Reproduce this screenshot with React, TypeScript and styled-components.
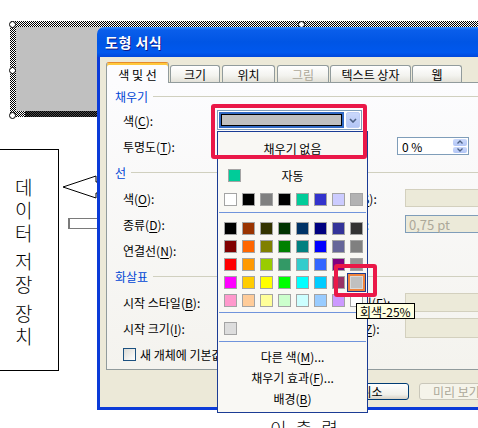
import React from 'react'
import styled, { createGlobalStyle, css } from 'styled-components'

const UI_FONT = `'Noto Sans CJK KR', 'Noto Sans', sans-serif`
const RED = '#EA1848'

const GlobalStyle = createGlobalStyle`
  html, body {
    margin: 0;
    padding: 0;
    background: #fff;
    overflow: hidden;
  }
  body {
    font-family: ${UI_FONT};
  }
`

const Canvas = styled.div`
  position: relative;
  width: 478px;
  height: 428px;
  overflow: hidden;
  background: #fff;
  font-family: ${UI_FONT};
  font-size: 12px;
  color: #000;
`

// ---- slide canvas behind the dialog ----

const checker = css`
  background-color: #fff;
  background-image: repeating-conic-gradient(#000 0 25%, #fff 0 50%);
  background-size: 2px 2px;
`

const ShapeFrame = styled.div`
  position: absolute;
  left: 10px;
  top: 21px;
  width: 600px;
  height: 96px;
  box-sizing: border-box;
  padding: 6px 0 6px 6px;
  ${checker}
`

const ShapeFill = styled.div`
  height: 100%;
  background: #c0c0c0;
`

const ShadowBand = styled.div`
  position: absolute;
  left: 25px;
  top: 111px;
  width: 80px;
  height: 6px;
  background-color: #000;
  background-image: repeating-conic-gradient(#000 0 25%, #4a4a4a 0 50%);
  background-size: 2px 2px;
`

const Handle = styled.div<{ $x: number; $y: number }>`
  position: absolute;
  left: ${(p) => p.$x - 3.5}px;
  top: ${(p) => p.$y - 3.5}px;
  width: 7px;
  height: 7px;
  box-sizing: border-box;
  border: 1px solid #000;
  border-radius: 50%;
  background: #fff;
`

const TextShape = styled.div`
  position: absolute;
  left: -2px;
  top: 149px;
  width: 61px;
  height: 222px;
  box-sizing: border-box;
  border: 1px solid #000;
  background: #fff;
  padding: 25px 0 0 16px;
  display: flex;
  flex-direction: column;
  font-size: 19px;
  line-height: 23px;
  font-weight: 300;
`

const Word = styled.div<{ $gap?: number }>`
  display: flex;
  flex-direction: column;
  margin-top: ${(p) => p.$gap ?? 0}px;
`

const ArrowShape = styled.svg`
  position: absolute;
  left: 60px;
  top: 172px;
`

const BarShape = styled.div`
  position: absolute;
  left: 68px;
  top: 218px;
  width: 40px;
  height: 11px;
  box-sizing: border-box;
  border: 1px solid #7a7a7a;
  border-left-width: 2px;
  background: #fff;
`

const BottomCaption = styled.div`
  position: absolute;
  left: 270px;
  top: 419px;
  display: flex;
  gap: 9px;
  font-size: 18px;
  line-height: 18px;
  font-weight: 300;
`

// ---- dialog ----

const Dialog = styled.div`
  position: absolute;
  left: 97px;
  top: 27px;
  width: 430px;
  display: flex;
  flex-direction: column;
`

const TitleBar = styled.div`
  height: 30px;
  box-sizing: border-box;
  padding-left: 8px;
  display: flex;
  align-items: center;
  border-radius: 7px 7px 0 0;
  background: linear-gradient(
    180deg,
    #3c8ef8 0%,
    #0a5eeb 10%,
    #0055e5 50%,
    #0058ee 85%,
    #0048db 100%
  );
  color: #fff;
  font-weight: 700;
  font-size: 14px;
  letter-spacing: 0.5px;
  text-shadow: 1px 1px 0 #0f1c89;
`

const Body = styled.div`
  background: #ece9d8;
  border-left: 3px solid #0b3bd8;
  border-bottom: 3px solid #0b3bd8;
  padding: 5px 6px 7px 6px;
`

const TabRow = styled.div`
  display: flex;
  align-items: flex-end;
  height: 20px;
  position: relative;
  z-index: 1;
`

const Tab = styled.div<{ $w: number; $ml?: number; $active?: boolean; $disabled?: boolean }>`
  width: ${(p) => p.$w}px;
  margin-left: ${(p) => p.$ml ?? 0}px;
  height: ${(p) => (p.$active ? 21 : 17)}px;
  margin-bottom: ${(p) => (p.$active ? -1 : 0)}px;
  box-sizing: border-box;
  border: 1px solid #919b9c;
  border-bottom: none;
  border-radius: 3px 3px 0 0;
  display: flex;
  align-items: center;
  justify-content: center;
  white-space: nowrap;
  color: ${(p) => (p.$disabled ? '#aca899' : '#000')};
  background: linear-gradient(180deg, #ffffff 0%, #f3f3ef 60%, #e3e1d8 100%);

  ${(p) =>
    p.$active &&
    css`
      background: #fcfcfe;
      border-top-color: #e68b2c;
      box-shadow: inset 0 2px 0 #ffc83c;
      padding-top: 2px;
    `}
`

const Panel = styled.div`
  height: 288px;
  box-sizing: border-box;
  border: 1px solid #919b9c;
  background: linear-gradient(180deg, #fcfcfe 0%, #f4f3ee 100%);
  padding-top: 2px;
`

const GroupHeader = styled.div<{ $h?: number }>`
  height: ${(p) => p.$h ?? 26}px;
  display: flex;
  align-items: center;
  gap: 5px;
  padding-left: 8px;
  color: #0046d5;

  &::after {
    content: '';
    flex: 1;
    height: 1px;
    background: #d0d0bf;
  }
`

const Row = styled.div`
  height: 26px;
  display: flex;
  align-items: center;
  padding-left: 16px;
  white-space: nowrap;
`

const Label = styled.div`
  width: 94px;
  flex: none;
`

const U = styled.span`
  text-decoration: underline;
  text-underline-offset: 2px;
`

const FillCombo = styled.div`
  width: 145px;
  height: 20px;
  box-sizing: border-box;
  border: 1px solid #7f9db9;
  background: #fff;
  padding: 1px;
  display: flex;
  gap: 2px;
`

const FillSelection = styled.div`
  flex: 1;
  box-sizing: border-box;
  background: #316ac5;
  padding: 2px;
`

const FillSwatch = styled.div`
  height: 100%;
  box-sizing: border-box;
  border: 1px solid #000;
  background: #c0c0c0;
`

const DropButton = styled.div`
  width: 14px;
  box-sizing: border-box;
  border: 1px solid #bccdf5;
  border-radius: 2px;
  background: linear-gradient(180deg, #cad8fb 0%, #b3c6f6 100%);
  display: flex;
  align-items: center;
  justify-content: center;
`

const SliderTrack = styled.div`
  width: 150px;
  height: 4px;
  border: 1px solid #9d9c99;
  background: #f3f2ec;
  box-sizing: border-box;
`

const SpinBox = styled.div`
  margin-left: 30px;
  width: 72px;
  height: 18px;
  box-sizing: border-box;
  border: 1px solid #7f9db9;
  background: #fff;
  display: flex;
  align-items: center;
  padding-left: 4px;
`

const SpinValue = styled.div`
  flex: 1;
`

const SpinButtons = styled.div`
  width: 16px;
  height: 100%;
  padding: 1px;
  box-sizing: border-box;
  display: flex;
  flex-direction: column;
  gap: 1px;
`

const SpinButton = styled.div`
  flex: 1;
  border-radius: 2px;
  background: linear-gradient(180deg, #cad8fb 0%, #b3c6f6 100%);
  display: flex;
  align-items: center;
  justify-content: center;
`

const SmallCombo = styled.div`
  width: 100px;
  height: 18px;
  box-sizing: border-box;
  border: 1px solid #7f9db9;
  background: #fff;
`

const RightLabel = styled.div`
  width: 80px;
  margin-left: 8px;
  flex: none;
`

const FieldBox = styled.div<{ $h?: number; $blue?: boolean }>`
  width: 100px;
  height: ${(p) => p.$h ?? 18}px;
  box-sizing: border-box;
  border: 1px solid ${(p) => (p.$blue ? '#7f9db9' : '#d3d0be')};
  background: #ecead9;
  color: #aca899;
  padding-left: 3px;
  display: flex;
  align-items: center;
  font-size: 13px;
`

const CheckBox = styled.div`
  width: 13px;
  height: 13px;
  box-sizing: border-box;
  border: 1px solid #1c5180;
  background: linear-gradient(135deg, #dcdbd5 0%, #ffffff 100%);
  margin-right: 4px;
`

const ButtonRow = styled.div`
  display: flex;
  gap: 10px;
  margin-top: 13px;
  padding-left: 143px;
`

const Button = styled.div<{ $disabled?: boolean }>`
  width: 75px;
  height: 17px;
  flex: none;
  box-sizing: border-box;
  border: 1px solid ${(p) => (p.$disabled ? '#c9c7ba' : '#003c74')};
  border-radius: 3px;
  background: ${(p) =>
    p.$disabled ? '#f5f4ea' : 'linear-gradient(180deg, #ffffff 0%, #f0f0ea 70%, #d6d0c5 100%)'};
  color: ${(p) => (p.$disabled ? '#aca899' : '#000')};
  display: flex;
  align-items: center;
  justify-content: center;
  white-space: nowrap;
`

// ---- colour dropdown ----

const Popup = styled.div`
  position: absolute;
  left: 217px;
  top: 131px;
  width: 151px;
  height: 282px;
  box-sizing: border-box;
  border: 1px solid #1b3c95;
  background: #f9f8f4;
  display: flex;
  flex-direction: column;
  z-index: 5;
`

const NoFill = styled.div`
  height: 32px;
  flex: none;
  display: flex;
  align-items: center;
  justify-content: center;
`

const AutoRow = styled.div`
  height: 22px;
  flex: none;
  display: grid;
  grid-template-columns: 1fr auto 1fr;
  align-items: center;
`

const AutoSwatchCell = styled.div`
  padding-left: 10px;
`

const SwatchGrid = styled.div<{ $mt: number }>`
  display: grid;
  grid-template-columns: repeat(8, 13px);
  gap: 5px;
  padding-left: 6px;
  margin-top: ${(p) => p.$mt}px;
`

const Swatch = styled.div<{ $c: string; $selected?: boolean }>`
  width: 13px;
  height: 13px;
  box-sizing: border-box;
  border: 1px solid #a4a4a4;
  background: ${(p) => p.$c};

  ${(p) =>
    p.$selected &&
    css`
      border-color: #d9d9d9;
      box-shadow: 0 0 0 2px #f0843c, 0 0 0 3px #1b3a8e;
    `}
`

const Separator = styled.div<{ $mt: number }>`
  height: 1px;
  flex: none;
  margin: ${(p) => p.$mt}px 1px 0 1px;
  background: #7094dc;
`

const MenuList = styled.div`
  padding-top: 4px;
`

const MenuItem = styled.div`
  height: 21px;
  display: flex;
  align-items: center;
  justify-content: center;
  white-space: nowrap;
`

const Highlight = styled.div<{ $x: number; $y: number; $w: number; $h: number }>`
  position: absolute;
  left: ${(p) => p.$x}px;
  top: ${(p) => p.$y}px;
  width: ${(p) => p.$w}px;
  height: ${(p) => p.$h}px;
  box-sizing: border-box;
  border: 4px solid ${RED};
  border-radius: 3px;
  z-index: 6;
`

const Tooltip = styled.div`
  position: absolute;
  left: 356px;
  top: 303px;
  height: 16px;
  box-sizing: border-box;
  padding: 0 3px;
  border: 1px solid #000;
  background: #ffffe1;
  display: flex;
  align-items: center;
  white-space: nowrap;
  z-index: 7;
`

const RECENT = ['#FFFFFF', '#000000', '#808080', '#000000', '#00CC99', '#3333CC', '#CCCCFF', '#B2B2B2']

const PALETTE = [
  '#000000', '#993300', '#333300', '#003300', '#003366', '#000080', '#333399', '#333333',
  '#800000', '#FF6600', '#808000', '#008000', '#008080', '#0000FF', '#666699', '#808080',
  '#FF0000', '#FF9900', '#99CC00', '#339966', '#33CCCC', '#3366FF', '#800080', '#969696',
  '#FF00FF', '#FFCC00', '#FFFF00', '#00FF00', '#00FFFF', '#00CCFF', '#993366', '#C0C0C0',
  '#FF99CC', '#FFCC99', '#FFFF99', '#CCFFCC', '#CCFFFF', '#99CCFF', '#CC99FF', '#FFFFFF',
]

const SELECTED = 31

const Chevron = () => (
  <svg width="8" height="5" viewBox="0 0 8 5">
    <polyline points="1,1 4,4 7,1" fill="none" stroke="#4d6185" strokeWidth="1.6" />
  </svg>
)

const SpinArrow = ({ up }: { up?: boolean }) => (
  <svg width="6" height="4" viewBox="0 0 6 4">
    <polyline
      points={up ? '0.5,3.5 3,1 5.5,3.5' : '0.5,0.5 3,3 5.5,0.5'}
      fill="none"
      stroke="#4d6185"
      strokeWidth="1.3"
    />
  </svg>
)

const App = () => {
  return (
    <Canvas>
      <GlobalStyle />

      <ShapeFrame>
        <ShapeFill />
      </ShapeFrame>
      <ShadowBand />
      <Handle $x={12} $y={24} />
      <Handle $x={12} $y={70} />
      <Handle $x={12} $y={115} />
      <Handle $x={301} $y={24} />

      <TextShape>
        <Word>
          <span>데</span>
          <span>이</span>
          <span>터</span>
        </Word>
        <Word $gap={5}>
          <span>저</span>
          <span>장</span>
        </Word>
        <Word $gap={6}>
          <span>장</span>
          <span>치</span>
        </Word>
      </TextShape>

      <ArrowShape width="50" height="30" viewBox="0 0 50 30">
        <polygon
          points="3,15 36,4 36,10 50,10 50,21 36,21 36,26"
          fill="#fff"
          stroke="#000"
          strokeWidth="1"
        />
      </ArrowShape>
      <BarShape />

      <BottomCaption>
        <span>이</span>
        <span>출</span>
        <span>력</span>
      </BottomCaption>

      <Dialog>
        <TitleBar>도형 서식</TitleBar>
        <Body>
          <TabRow>
            <Tab $w={63} $active>
              색 및 선
            </Tab>
            <Tab $w={50} $ml={1}>
              크기
            </Tab>
            <Tab $w={53} $ml={2}>
              위치
            </Tab>
            <Tab $w={52} $ml={2} $disabled>
              그림
            </Tab>
            <Tab $w={81} $ml={1}>
              텍스트 상자
            </Tab>
            <Tab $w={50} $ml={1}>
              웹
            </Tab>
          </TabRow>

          <Panel>
            <GroupHeader $h={22}>채우기</GroupHeader>
            <Row>
              <Label>
                색(<U>C</U>):
              </Label>
              <FillCombo>
                <FillSelection>
                  <FillSwatch />
                </FillSelection>
                <DropButton>
                  <Chevron />
                </DropButton>
              </FillCombo>
            </Row>
            <Row>
              <Label>
                투명도(<U>T</U>):
              </Label>
              <SliderTrack />
              <SpinBox>
                <SpinValue>0 %</SpinValue>
                <SpinButtons>
                  <SpinButton>
                    <SpinArrow up />
                  </SpinButton>
                  <SpinButton>
                    <SpinArrow />
                  </SpinButton>
                </SpinButtons>
              </SpinBox>
            </Row>

            <GroupHeader>선</GroupHeader>
            <Row>
              <Label>
                색(<U>O</U>):
              </Label>
              <SmallCombo />
              <RightLabel>
                스타일(<U>S</U>):
              </RightLabel>
              <FieldBox />
            </Row>
            <Row>
              <Label>
                종류(<U>D</U>):
              </Label>
              <SmallCombo />
              <RightLabel>
                두께(<U>W</U>):
              </RightLabel>
              <FieldBox $blue>0,75 pt</FieldBox>
            </Row>
            <Row>
              <Label>
                연결선(<U>N</U>):
              </Label>
              <SmallCombo />
            </Row>

            <GroupHeader>화살표</GroupHeader>
            <Row>
              <Label>
                시작 스타일(<U>B</U>):
              </Label>
              <SmallCombo />
              <RightLabel>
                끝 스타일(<U>E</U>):
              </RightLabel>
              <FieldBox $h={19} />
            </Row>
            <Row>
              <Label>
                시작 크기(<U>I</U>):
              </Label>
              <SmallCombo />
              <RightLabel>
                끝 크기(<U>Z</U>):
              </RightLabel>
              <FieldBox $h={20} />
            </Row>
            <Row>
              <CheckBox />
              새 개체에 기본값 적용
            </Row>
          </Panel>

          <ButtonRow>
            <Button>확인</Button>
            <Button>취소</Button>
            <Button $disabled>미리 보기</Button>
          </ButtonRow>
        </Body>
      </Dialog>

      <Popup>
        <NoFill>채우기 없음</NoFill>
        <AutoRow>
          <AutoSwatchCell>
            <Swatch $c="#00CC99" />
          </AutoSwatchCell>
          <span>자동</span>
          <span />
        </AutoRow>
        <SwatchGrid $mt={7}>
          {RECENT.map((c, i) => (
            <Swatch key={i} $c={c} />
          ))}
        </SwatchGrid>
        <Separator $mt={6} />
        <SwatchGrid $mt={9}>
          {PALETTE.map((c, i) => (
            <Swatch key={i} $c={c} $selected={i === SELECTED} />
          ))}
        </SwatchGrid>
        <Separator $mt={5} />
        <SwatchGrid $mt={9}>
          <Swatch $c="#DDDDDD" />
        </SwatchGrid>
        <Separator $mt={6} />
        <MenuList>
          <MenuItem>
            다른 색(<U>M</U>)...
          </MenuItem>
          <MenuItem>
            채우기 효과(<U>F</U>)...
          </MenuItem>
          <MenuItem>
            배경(<U>B</U>)
          </MenuItem>
        </MenuList>
      </Popup>

      <Highlight $x={211} $y={104} $w={156} $h={55} />
      <Highlight $x={334} $y={264} $w={43} $h={33} />
      <Tooltip>회색-25%</Tooltip>
    </Canvas>
  )
}

export default App
